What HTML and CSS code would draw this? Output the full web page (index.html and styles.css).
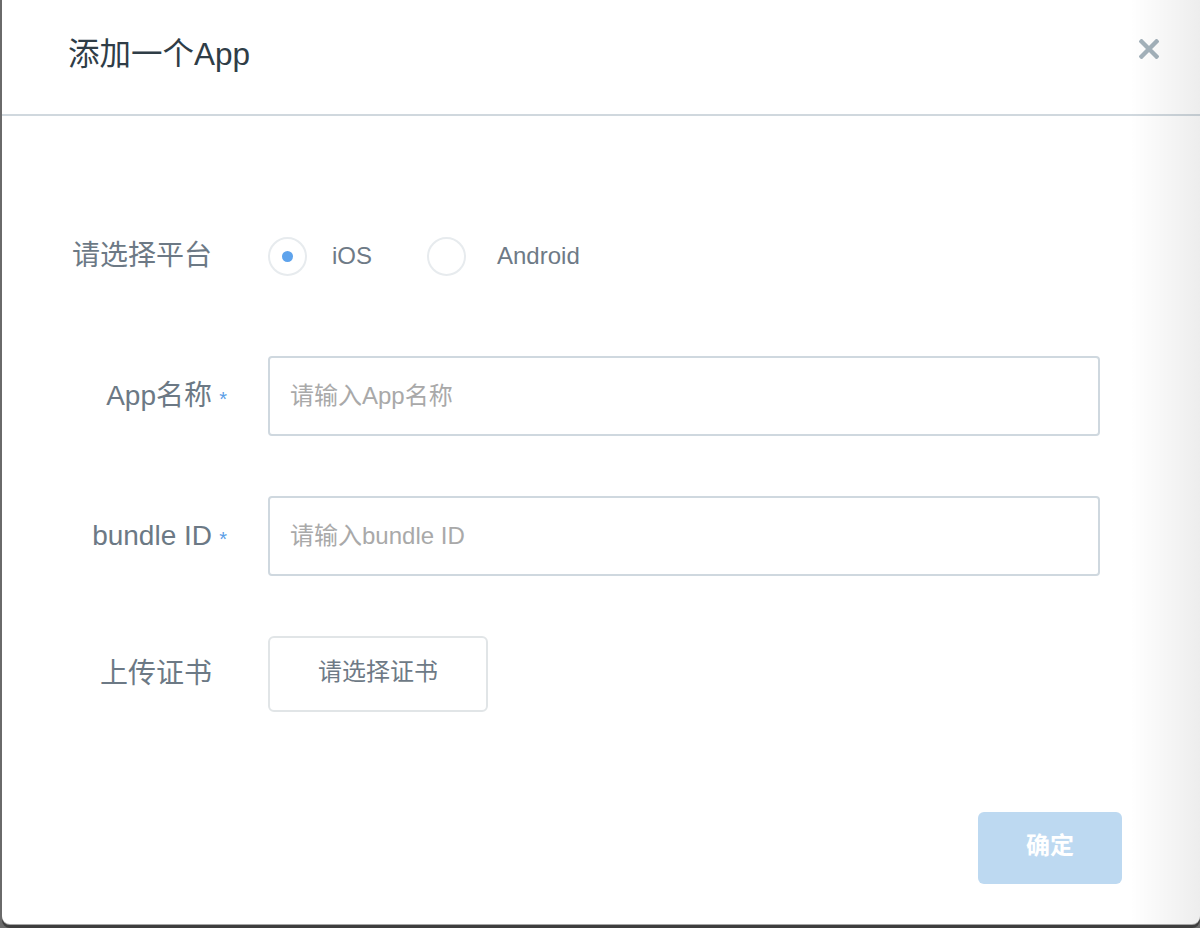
FILE: index.html
```html
<!DOCTYPE html>
<html lang="zh-CN">
<head>
<meta charset="utf-8">
<title>添加一个App</title>
<link rel="stylesheet" href="styles.css">
</head>
<body>
<div class="screen">
  <div class="modal">
    <div class="modal-header">
      <h1 class="modal-title">添加一个App</h1>
      <button class="close-btn" aria-label="关闭">
        <svg width="20" height="20" viewBox="0 0 20 20"><path d="M2.5 2.5 L17.5 17.5 M17.5 2.5 L2.5 17.5" stroke="#a4b2bb" stroke-width="4.4" stroke-linecap="square" fill="none"/></svg>
      </button>
    </div>
    <div class="modal-body">
      <div class="form-row row-radio">
        <div class="form-label">请选择平台</div>
        <div class="radio-group">
          <label class="radio">
            <span class="radio-circle checked"><span class="radio-dot"></span></span>
            <span class="radio-text">iOS</span>
          </label>
          <label class="radio radio-wide">
            <span class="radio-circle"></span>
            <span class="radio-text">Android</span>
          </label>
        </div>
      </div>
      <div class="form-row">
        <div class="form-label required">App名称<span class="star">*</span></div>
        <div class="text-input"><span class="placeholder">请输入App名称</span></div>
      </div>
      <div class="form-row">
        <div class="form-label required">bundle ID<span class="star">*</span></div>
        <div class="text-input"><span class="placeholder">请输入bundle ID</span></div>
      </div>
      <div class="form-row">
        <div class="form-label">上传证书</div>
        <button class="file-btn">请选择证书</button>
      </div>
    </div>
    <div class="modal-footer">
      <button class="confirm-btn">确定</button>
    </div>
    <div class="edge-shade"></div>
  </div>
</div>
</body>
</html>
```

FILE: styles.css
```css
* { box-sizing: border-box; }
html, body { margin: 0; padding: 0; }
body {
  background: #3e3e3e;
  font-family: "Liberation Sans", "Noto Sans CJK SC", sans-serif;
}
.screen {
  width: 1200px;
  height: 928px;
  overflow: hidden;
  background: #6a6a6a;
}
.modal {
  position: relative;
  margin-left: 2px;
  width: 1198px;
  height: 924px;
  background: #ffffff;
  border-radius: 0 0 8px 8px;
  box-shadow: 0 1px 0 #a6a6a6, 0 4px 0 #3e3e3e;
  overflow: hidden;
}
.modal-header {
  height: 116px;
  border-bottom: 2px solid #d0d8de;
  display: flex;
  align-items: center;
  justify-content: space-between;
  padding: 0 41px 6px 66px;
}
.modal-title {
  margin: 0;
  font-size: 31.5px;
  font-weight: normal;
  line-height: 38px;
  color: #2f3d47;
}
.close-btn {
  border: 0;
  background: none;
  padding: 0;
  width: 20px;
  height: 20px;
  margin-bottom: 10px;
  cursor: pointer;
}
.close-btn svg { display: block; }
.modal-body {
  padding: 100px 0 0 66px;
  display: flex;
  flex-direction: column;
  gap: 60px;
}
.form-row {
  display: flex;
  align-items: center;
}
.row-radio { min-height: 80px; }
.form-label {
  position: relative;
  width: 144px;
  margin-right: 56px;
  text-align: right;
  font-size: 28px;
  line-height: 34px;
  color: #6c7985;
}
.star {
  position: absolute;
  right: -15px;
  top: 3px;
  font-size: 20px;
  color: #5b9de6;
}
.radio-group {
  display: flex;
  align-items: center;
  gap: 55px;
}
.radio {
  display: flex;
  align-items: center;
  gap: 25px;
}
.radio-wide { gap: 31px; }
.radio-circle {
  width: 39px;
  height: 39px;
  border-radius: 50%;
  border: 2px solid #e7ebee;
  display: flex;
  align-items: center;
  justify-content: center;
}
.radio-dot {
  width: 11px;
  height: 11px;
  border-radius: 50%;
  background: #5ea3ec;
}
.radio-text {
  font-size: 24px;
  line-height: 30px;
  color: #6e7a86;
}
.text-input {
  width: 832px;
  height: 80px;
  border: 2px solid #cfd8df;
  border-radius: 4px;
  display: flex;
  align-items: center;
  padding-left: 20px;
}
.placeholder {
  font-size: 24px;
  line-height: 30px;
  color: #a9a9a9;
}
.file-btn {
  width: 220px;
  height: 76px;
  border: 2px solid #e1e5e7;
  border-radius: 6px;
  background: #ffffff;
  font-family: inherit;
  font-size: 24px;
  line-height: 30px;
  color: #6e7a86;
  padding: 0 0 4px;
}
.modal-footer {
  display: flex;
  justify-content: flex-end;
  padding: 100px 78px 0 0;
}
.confirm-btn {
  width: 144px;
  height: 72px;
  border: 0;
  border-radius: 6px;
  background: #bdd9f1;
  color: #ffffff;
  font-family: inherit;
  font-size: 24px;
  line-height: 30px;
  font-weight: bold;
  padding: 0 0 5px;
}
.edge-shade {
  position: absolute;
  top: 0;
  right: 0;
  width: 70px;
  height: 100%;
  background: linear-gradient(to right, rgba(0,0,0,0), rgba(0,0,0,0.07));
  pointer-events: none;
}
```
